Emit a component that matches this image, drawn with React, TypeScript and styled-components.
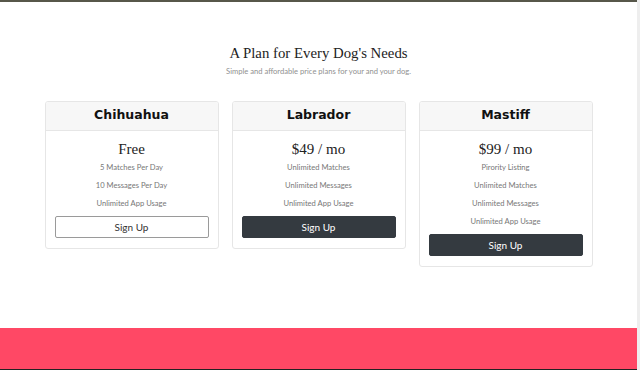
import React from 'react';
import styled, { createGlobalStyle } from 'styled-components';

const GlobalStyle = createGlobalStyle`
  html, body {
    margin: 0;
    padding: 0;
    background: #ffffff;
  }
`;

type Plan = {
  name: string;
  price: string;
  features: string[];
  outline?: boolean;
};

const PLANS: Plan[] = [
  {
    name: 'Chihuahua',
    price: 'Free',
    features: ['5 Matches Per Day', '10 Messages Per Day', 'Unlimited App Usage'],
    outline: true,
  },
  {
    name: 'Labrador',
    price: '$49 / mo',
    features: ['Unlimited Matches', 'Unlimited Messages', 'Unlimited App Usage'],
  },
  {
    name: 'Mastiff',
    price: '$99 / mo',
    features: ['Pirority Listing', 'Unlimited Matches', 'Unlimited Messages', 'Unlimited App Usage'],
  },
];

const App = () => {
  return (
    <Page>
      <GlobalStyle />
      <TopEdge />
      <Pricing>
        <Heading>A Plan for Every Dog's Needs</Heading>
        <Lead>Simple and affordable price plans for your and your dog.</Lead>
        <CardRow>
          {PLANS.map(plan => (
            <Card key={plan.name}>
              <CardHeader>
                <PlanName>{plan.name}</PlanName>
              </CardHeader>
              <CardBody>
                <Price>{plan.price}</Price>
                <Features>
                  {plan.features.map(f => (
                    <li key={f}>{f}</li>
                  ))}
                </Features>
                <SignUp $outline={plan.outline}>Sign Up</SignUp>
              </CardBody>
            </Card>
          ))}
        </CardRow>
      </Pricing>
      <Footer />
    </Page>
  );
};

const Page = styled.div`
  height: 370px;
  display: flex;
  flex-direction: column;
  border-right: 3px solid #eeeeee;
  box-sizing: border-box;
  overflow: hidden;
`;

const TopEdge = styled.div`
  height: 2px;
  background: #57574a;
  flex-shrink: 0;
`;

const Pricing = styled.section`
  flex: 1;
  display: flex;
  flex-direction: column;
  align-items: center;
  padding-top: 41px;
`;

const Heading = styled.h2`
  margin: 0;
  font-family: "Liberation Serif", serif;
  font-weight: 400;
  font-size: 14.8px;
  line-height: 20px;
  color: #222;
`;

const Lead = styled.p`
  margin: 3px 0 0;
  font-family: Lato, sans-serif;
  font-size: 7.6px;
  line-height: 11px;
  color: #909090;
`;

const CardRow = styled.div`
  margin-top: 24px;
  display: flex;
  align-items: flex-start;
  gap: 13px;
`;

const Card = styled.div`
  width: 174px;
  border: 1px solid #e6e6e6;
  border-radius: 3px;
  overflow: hidden;
  box-sizing: border-box;
`;

const CardHeader = styled.div`
  height: 29px;
  padding-bottom: 3px;
  box-sizing: border-box;
  display: flex;
  align-items: center;
  justify-content: center;
  background: #f7f7f7;
  border-bottom: 1px solid #e6e6e6;
`;

const PlanName = styled.h4`
  margin: 0;
  font-family: "DejaVu Sans", sans-serif;
  font-weight: 700;
  font-size: 12.5px;
  line-height: 14px;
  color: #111;
`;

const CardBody = styled.div`
  padding: 9px 9px 10px;
  display: flex;
  flex-direction: column;
  align-items: stretch;
  text-align: center;
`;

const Price = styled.div`
  font-family: "Liberation Serif", serif;
  font-size: 15px;
  line-height: 18px;
  color: #222;
`;

const Features = styled.ul`
  list-style: none;
  margin: 0;
  padding: 0;
  font-family: Lato, sans-serif;
  font-size: 7.6px;
  color: #777;

  li {
    height: 18px;
    line-height: 18px;
  }
`;

const SignUp = styled.button<{ $outline?: boolean }>`
  margin-top: 4px;
  height: 22px;
  border-radius: 2px;
  font-family: Lato, sans-serif;
  font-size: 10px;
  cursor: pointer;
  border: 1px solid ${p => (p.$outline ? '#9a9a9a' : '#343a40')};
  background: ${p => (p.$outline ? '#ffffff' : '#343a40')};
  color: ${p => (p.$outline ? '#333' : '#ffffff')};
`;

const Footer = styled.footer`
  height: 41px;
  flex-shrink: 0;
  background: #ff4865;
  border-bottom: 1px solid #222;
`;

export default App;
